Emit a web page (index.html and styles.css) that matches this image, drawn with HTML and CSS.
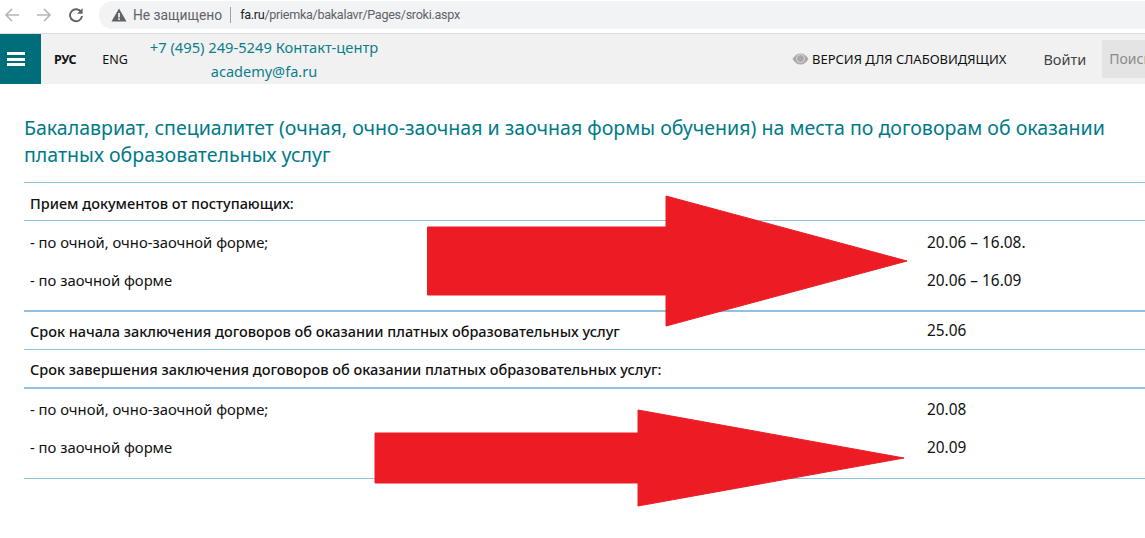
FILE: index.html
```html
<!DOCTYPE html>
<html lang="ru">
<head>
<meta charset="utf-8">
<title>Сроки</title>
<link rel="stylesheet" href="styles.css">
</head>
<body>
<div class="chrome">
  <svg class="nav-icon" width="16" height="16" viewBox="0 0 16 16"><path d="M15 8H2M8 2L2 8l6 6" fill="none" stroke="#b4b7ba" stroke-width="1.7"/></svg>
  <svg class="nav-icon" width="16" height="16" viewBox="0 0 16 16"><path d="M1 8h13M8 2l6 6-6 6" fill="none" stroke="#b4b7ba" stroke-width="1.7"/></svg>
  <svg class="nav-icon" width="16" height="16" viewBox="0 0 16 16"><path d="M13.2 5.2A6 6 0 1 0 14 9" fill="none" stroke="#5f6368" stroke-width="1.9"/><path d="M14.6 1.2v5.6H9z" fill="#5f6368"/></svg>
  <div class="omnibox">
    <svg class="warn" width="16" height="14" viewBox="0 0 16 14"><path d="M8 0.5L15.5 13.5H0.5z" fill="#5f6368"/><rect x="7.2" y="5" width="1.6" height="4.5" fill="#fff"/><rect x="7.2" y="10.3" width="1.6" height="1.6" fill="#fff"/></svg>
    <span class="insecure">Не защищено</span>
    <span class="sep"></span>
    <span class="url"><span class="host">fa.ru</span>/priemka/bakalavr/Pages/sroki.aspx</span>
  </div>
</div>
<header class="topbar">
  <div class="burger"><span></span><span></span><span></span></div>
  <span class="lang lang-active">РУС</span>
  <span class="lang lang-en">ENG</span>
  <div class="contacts">
    <div>+7 (495) 249-5249 Контакт-центр</div>
    <div class="mail">academy@fa.ru</div>
  </div>
  <div class="tools">
    <svg class="eye" width="17" height="12" viewBox="0 0 17 12"><path d="M0.5 6C3 2 5.500 0.500 8.500 0.500S14 2 16.500 6C14 10 11.500 11.500 8.500 11.500S3 10 0.500 6z" fill="#a9a9a9"/><circle cx="8.500" cy="5.500" r="4" fill="#a9a9a9" stroke="#e4e4e4" stroke-width="0.8"/></svg>
    <span class="vision">ВЕРСИЯ ДЛЯ СЛАБОВИДЯЩИХ</span>
    <span class="login">Войти</span>
    <span class="search">Поиск</span>
  </div>
</header>
<main class="content">
  <h1 class="title">Бакалавриат, специалитет (очная, очно-заочная и заочная формы обучения) на места по договорам об оказании платных образовательных услуг</h1>
  <div class="table">
    <div class="row head first"><span>Прием документов от поступающих:</span></div>
    <div class="group">
      <div class="line"><span>- по очной, очно-заочной форме;</span><span class="date">20.06 – 16.08.</span></div>
      <div class="line"><span>- по заочной форме</span><span class="date">20.06 – 16.09</span></div>
    </div>
    <div class="row head thick tall"><span>Срок начала заключения договоров об оказании платных образовательных услуг</span><span class="date">25.06</span></div>
    <div class="row head"><span>Срок завершения заключения договоров об оказании платных образовательных услуг:</span></div>
    <div class="group thick last">
      <div class="line"><span>- по очной, очно-заочной форме;</span><span class="date">20.08</span></div>
      <div class="line"><span>- по заочной форме</span><span class="date">20.09</span></div>
    </div>
    <div class="end"></div>
  </div>
</main>
<svg class="arrows" width="1145" height="538" viewBox="0 0 1145 538">
  <path d="M427.500 227H666V196L907 261L666 326V295H427.500z" fill="#ed1c24" stroke="#ed1c24" stroke-linejoin="round"/>
  <path d="M375 433H638V410L904 458L638 506V483H375z" fill="#ed1c24" stroke="#ed1c24" stroke-linejoin="round"/>
</svg>
</body>
</html>
```
FILE: styles.css
```css
* { box-sizing: border-box; }
html, body { margin: 0; height: 538px; overflow: hidden; background: #fff; }
body { position: relative; font-family: "Noto Sans", "Open Sans", sans-serif; color: #111; }

.chrome { height: 34px; display: flex; align-items: center; padding: 0 0 4px 4px; gap: 16px; border-bottom: 1px solid #dadce0; background: #fff; }
.nav-icon { flex: none; }
.omnibox { flex: 1; height: 28px; margin-left: -1px; background: #f1f3f4; border-radius: 14px 0 0 14px; display: flex; align-items: center; padding-left: 12px; font: 12.6px "Roboto", sans-serif; }
.warn { flex: none; }
.insecure { margin-left: 6px; color: #5f6368; font-size: 13.8px; }
.sep { width: 1px; height: 16px; background: #9aa0a6; margin: 0 9px 0 8px; }
.url { color: #5f6368; letter-spacing: -0.3px; }
.host { color: #202124; }

.topbar { height: 50px; background: #f1f1f1; display: flex; align-items: center; overflow: hidden; }
.burger { width: 41px; height: 50px; padding-left: 7px; background: #006e7a; display: flex; flex-direction: column; justify-content: center; align-items: flex-start; gap: 2.5px; flex: none; }
.burger span { width: 18px; height: 3px; background: #fff; }
.lang { font-size: 12.500px; color: #111; flex: none; }
.lang-active { margin-left: 13px; font-weight: 700; letter-spacing: -0.3px; }
.lang-en { margin-left: 26px; }
.contacts { margin-left: 22px; width: 229px; color: #0b7f8c; font-size: 14.700px; line-height: 24px; flex: none; text-align: left; white-space: nowrap; }
.mail { padding-left: 61px; font-size: 14.500px; }
.tools { margin-left: auto; display: flex; align-items: center; flex: none; width: 353px; }
.eye { flex: none; margin-right: 3px; }
.vision { font-size: 13px; letter-spacing: 0; white-space: nowrap; }
.login { margin-left: 37px; font-size: 14.500px; color: #444; }
.search { margin-left: 16px; height: 38px; width: 60px; flex: none; padding-left: 7px; background: #e4e4e4; color: #8a8a8a; font-size: 14px; line-height: 38px; overflow: hidden; white-space: nowrap; }

.content { padding: 30px 0 0 24px; }
.title { margin: 0 30px 0 0; font-size: 19.560px; font-weight: 400; line-height: 27px; color: #007a87; height: 68px; }
.table { font-size: 14.800px; }
.row, .group { border-top: 1px solid #8ec1e2; padding-left: 6px; }
.row { display: flex; align-items: center; height: 38px; font-size: 14.500px; }
.first { padding-top: 2px; }
.tall { height: 39px; }
.head { font-weight: 500; }
.date { font-size: 15.400px; }
.row .date { font-weight: 400; }
.thick { border-top-width: 2px; }
.group { height: 90px; padding-top: 2px; }
.group.last { height: 91px; padding-top: 1px; }
.line { display: flex; height: 38px; align-items: center; }
.line > span:first-child, .row > span:first-child { width: 897px; flex: none; }
.end { border-top: 1px solid #8ec1e2; }

.arrows { position: absolute; left: 0; top: 0; pointer-events: none; }
```
